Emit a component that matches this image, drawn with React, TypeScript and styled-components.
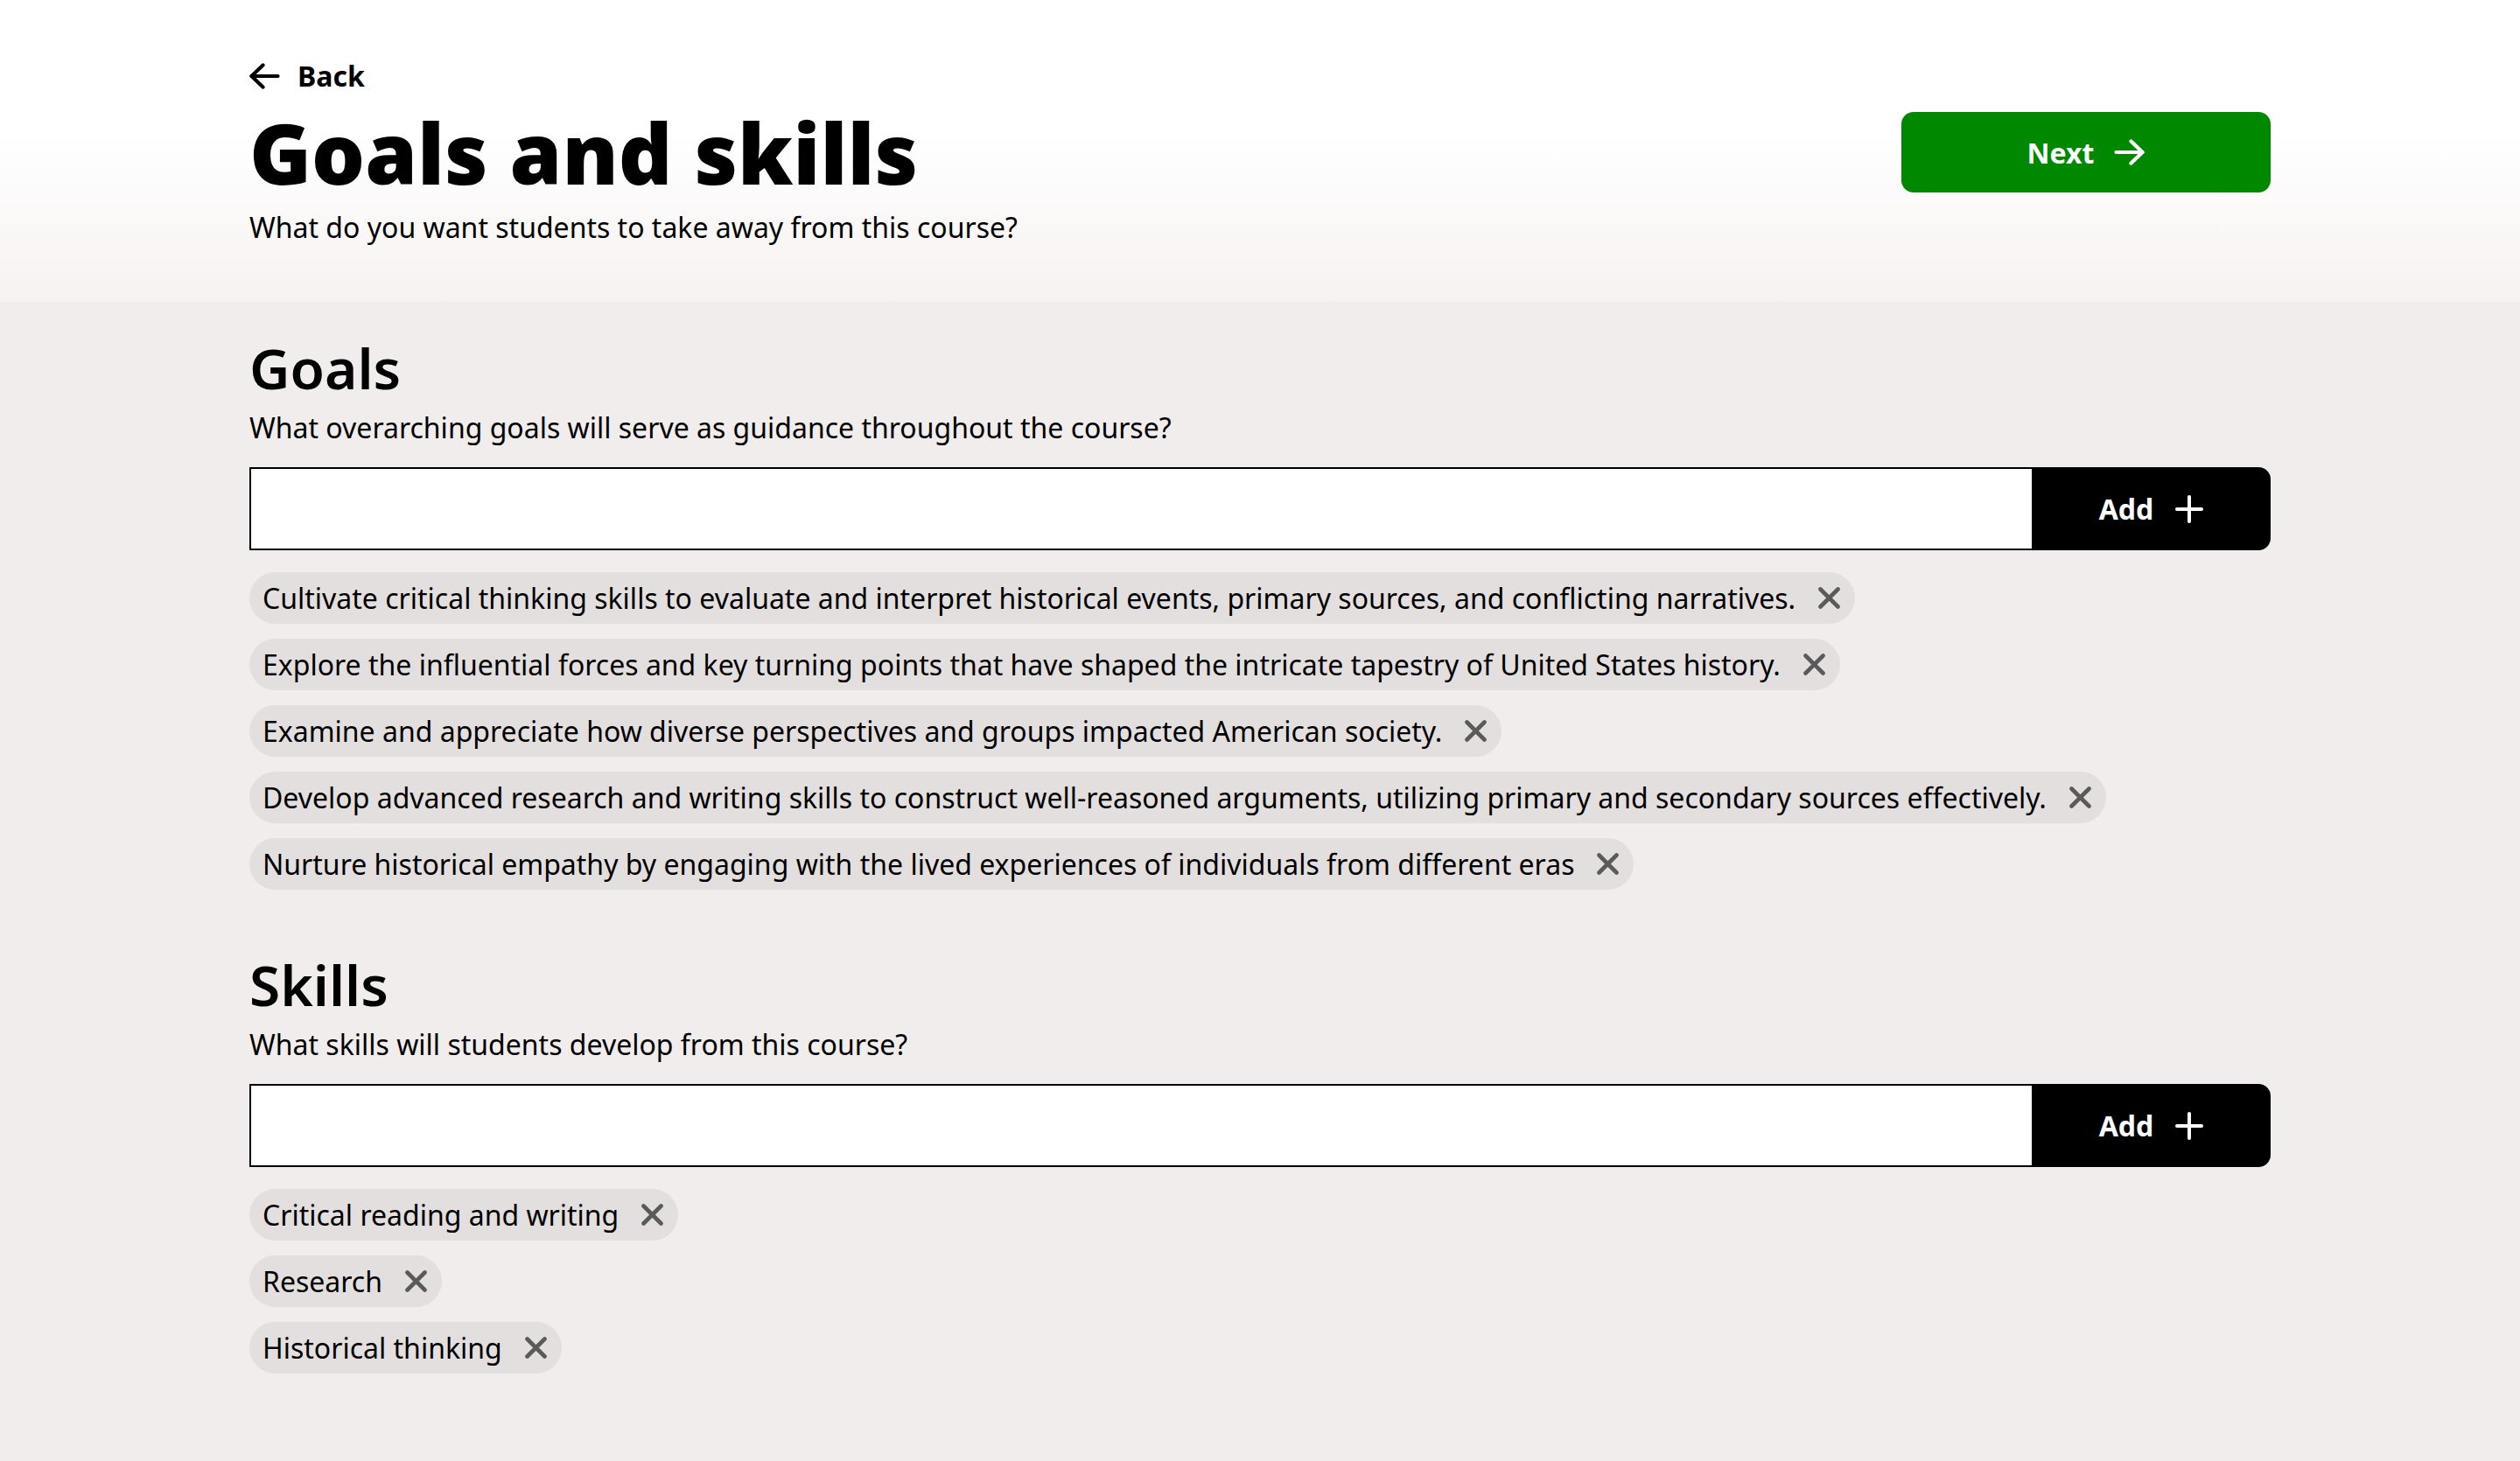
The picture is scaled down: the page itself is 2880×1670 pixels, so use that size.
import React, { useState } from "react";
import styled, { createGlobalStyle } from "styled-components";

const GlobalStyle = createGlobalStyle`
  html, body {
    margin: 0;
    padding: 0;
    background: #f0edec;
  }
  body {
    font-family: "Noto Sans", "Open Sans", sans-serif;
    color: #000;
  }
  * { box-sizing: border-box; }
`;

const Page = styled.div`
  min-height: 100vh;
  background: #f0edec;
`;

const Header = styled.header`
  background: linear-gradient(to bottom, #ffffff 0%, #ffffff 45%, #f6f2f1 100%);
  padding: 67px 0 65px;
`;

const Container = styled.div`
  max-width: 2310px;
  margin: 0 auto;
`;

const BackLink = styled.a`
  display: inline-flex;
  align-items: center;
  gap: 20px;
  font-size: 32px;
  line-height: 40px;
  font-weight: 700;
  color: #000;
  text-decoration: none;
  cursor: pointer;
`;

const TitleRow = styled.div`
  display: flex;
  align-items: center;
  justify-content: space-between;
  margin-top: 14px;
`;

const Title = styled.h1`
  margin: 0;
  font-size: 96px;
  line-height: 106px;
  font-weight: 900;
  letter-spacing: 0;
`;

const NextButton = styled.button`
  width: 422px;
  height: 92px;
  border: none;
  border-radius: 14px;
  background: #008800;
  color: #fff;
  font-family: inherit;
  font-size: 32px;
  font-weight: 700;
  display: inline-flex;
  align-items: center;
  justify-content: center;
  gap: 23px;
  cursor: pointer;
`;

const Lead = styled.p`
  margin: 13px 0 0;
  font-size: 32px;
  line-height: 40px;
`;

const Main = styled.main`
  padding: 38px 0 80px;
`;

const Section = styled.section<{ $spaced?: boolean }>`
  margin-top: ${(p) => (p.$spaced ? "71px" : "0")};
`;

const SectionTitle = styled.h2`
  margin: 0;
  font-size: 64px;
  line-height: 76px;
  font-weight: 600;
`;

const SectionHint = styled.p`
  margin: 10px 0 0;
  font-size: 32px;
  line-height: 40px;
`;

const InputRow = styled.div`
  display: flex;
  height: 95px;
  margin-top: 25px;
`;

const TextInput = styled.input`
  flex: 1;
  min-width: 0;
  height: 100%;
  border: 2px solid #000;
  border-right: none;
  background: #fff;
  font-family: inherit;
  font-size: 32px;
  padding: 0 24px;
  outline: none;
`;

const AddButton = styled.button`
  width: 273px;
  height: 100%;
  border: none;
  border-radius: 0 14px 14px 0;
  background: #000;
  color: #fff;
  font-family: inherit;
  font-size: 32px;
  font-weight: 700;
  display: inline-flex;
  align-items: center;
  justify-content: center;
  gap: 25px;
  cursor: pointer;
`;

const ChipList = styled.ul`
  list-style: none;
  margin: 25px 0 0;
  padding: 0;
  display: flex;
  flex-direction: column;
  align-items: flex-start;
  gap: 17px;
`;

const Chip = styled.li`
  display: inline-flex;
  align-items: center;
  gap: 26px;
  height: 59px;
  padding: 0 17px 0 15px;
  border-radius: 30px;
  background: #e3dfdf;
  font-size: 32px;
  line-height: 40px;
  color: #000;
`;

const RemoveButton = styled.button`
  width: 25px;
  height: 25px;
  padding: 0;
  border: none;
  background: transparent;
  display: inline-flex;
  align-items: center;
  justify-content: center;
  cursor: pointer;
  color: #5a5a5a;
`;

const ArrowIcon = ({ left }: { left?: boolean }) => (
  <svg
    width="35"
    height="30"
    viewBox="0 0 35 30"
    fill="none"
    stroke="currentColor"
    strokeWidth="4.2"
    strokeLinecap="round"
    strokeLinejoin="round"
    style={left ? { transform: "scaleX(-1)" } : undefined}
  >
    <path d="M2.5 15H32.5" />
    <path d="M19.5 2.5L32.5 15L19.5 27.5" />
  </svg>
);

const PlusIcon = () => (
  <svg width="32" height="32" viewBox="0 0 32 32" fill="none" stroke="currentColor" strokeWidth="4" strokeLinecap="round">
    <path d="M16 2V30" />
    <path d="M2 16H30" />
  </svg>
);

const XIcon = () => (
  <svg width="25" height="25" viewBox="0 0 25 25" fill="none" stroke="currentColor" strokeWidth="4.6" strokeLinecap="round">
    <path d="M2.5 2.5L22.5 22.5" />
    <path d="M22.5 2.5L2.5 22.5" />
  </svg>
);

const initialGoals = [
  "Cultivate critical thinking skills to evaluate and interpret historical events, primary sources, and conflicting narratives.",
  "Explore the influential forces and key turning points that have shaped the intricate tapestry of United States history.",
  "Examine and appreciate how diverse perspectives and groups impacted American society.",
  "Develop advanced research and writing skills to construct well-reasoned arguments, utilizing primary and secondary sources effectively.",
  "Nurture historical empathy by engaging with the lived experiences of individuals from different eras",
];

const initialSkills = ["Critical reading and writing", "Research", "Historical thinking"];

function TagSection({
  title,
  hint,
  items,
  setItems,
  spaced,
}: {
  title: string;
  hint: string;
  items: string[];
  setItems: (v: string[]) => void;
  spaced?: boolean;
}) {
  const [value, setValue] = useState("");
  const add = () => {
    const v = value.trim();
    if (!v) return;
    setItems([...items, v]);
    setValue("");
  };
  return (
    <Section $spaced={spaced}>
      <SectionTitle>{title}</SectionTitle>
      <SectionHint>{hint}</SectionHint>
      <InputRow>
        <TextInput
          value={value}
          onChange={(e) => setValue(e.target.value)}
          onKeyDown={(e) => e.key === "Enter" && add()}
          aria-label={title}
        />
        <AddButton onClick={add}>
          Add <PlusIcon />
        </AddButton>
      </InputRow>
      <ChipList>
        {items.map((item, i) => (
          <Chip key={item + i}>
            <span>{item}</span>
            <RemoveButton aria-label="Remove" onClick={() => setItems(items.filter((_, j) => j !== i))}>
              <XIcon />
            </RemoveButton>
          </Chip>
        ))}
      </ChipList>
    </Section>
  );
}

export default function App() {
  const [goals, setGoals] = useState(initialGoals);
  const [skills, setSkills] = useState(initialSkills);
  return (
    <Page>
      <GlobalStyle />
      <Header>
        <Container>
          <BackLink>
            <ArrowIcon left />
            Back
          </BackLink>
          <TitleRow>
            <Title>Goals and skills</Title>
            <NextButton>
              Next <ArrowIcon />
            </NextButton>
          </TitleRow>
          <Lead>What do you want students to take away from this course?</Lead>
        </Container>
      </Header>
      <Main>
        <Container>
          <TagSection
            title="Goals"
            hint="What overarching goals will serve as guidance throughout the course?"
            items={goals}
            setItems={setGoals}
          />
          <TagSection
            title="Skills"
            hint="What skills will students develop from this course?"
            items={skills}
            setItems={setSkills}
            spaced
          />
        </Container>
      </Main>
    </Page>
  );
}
